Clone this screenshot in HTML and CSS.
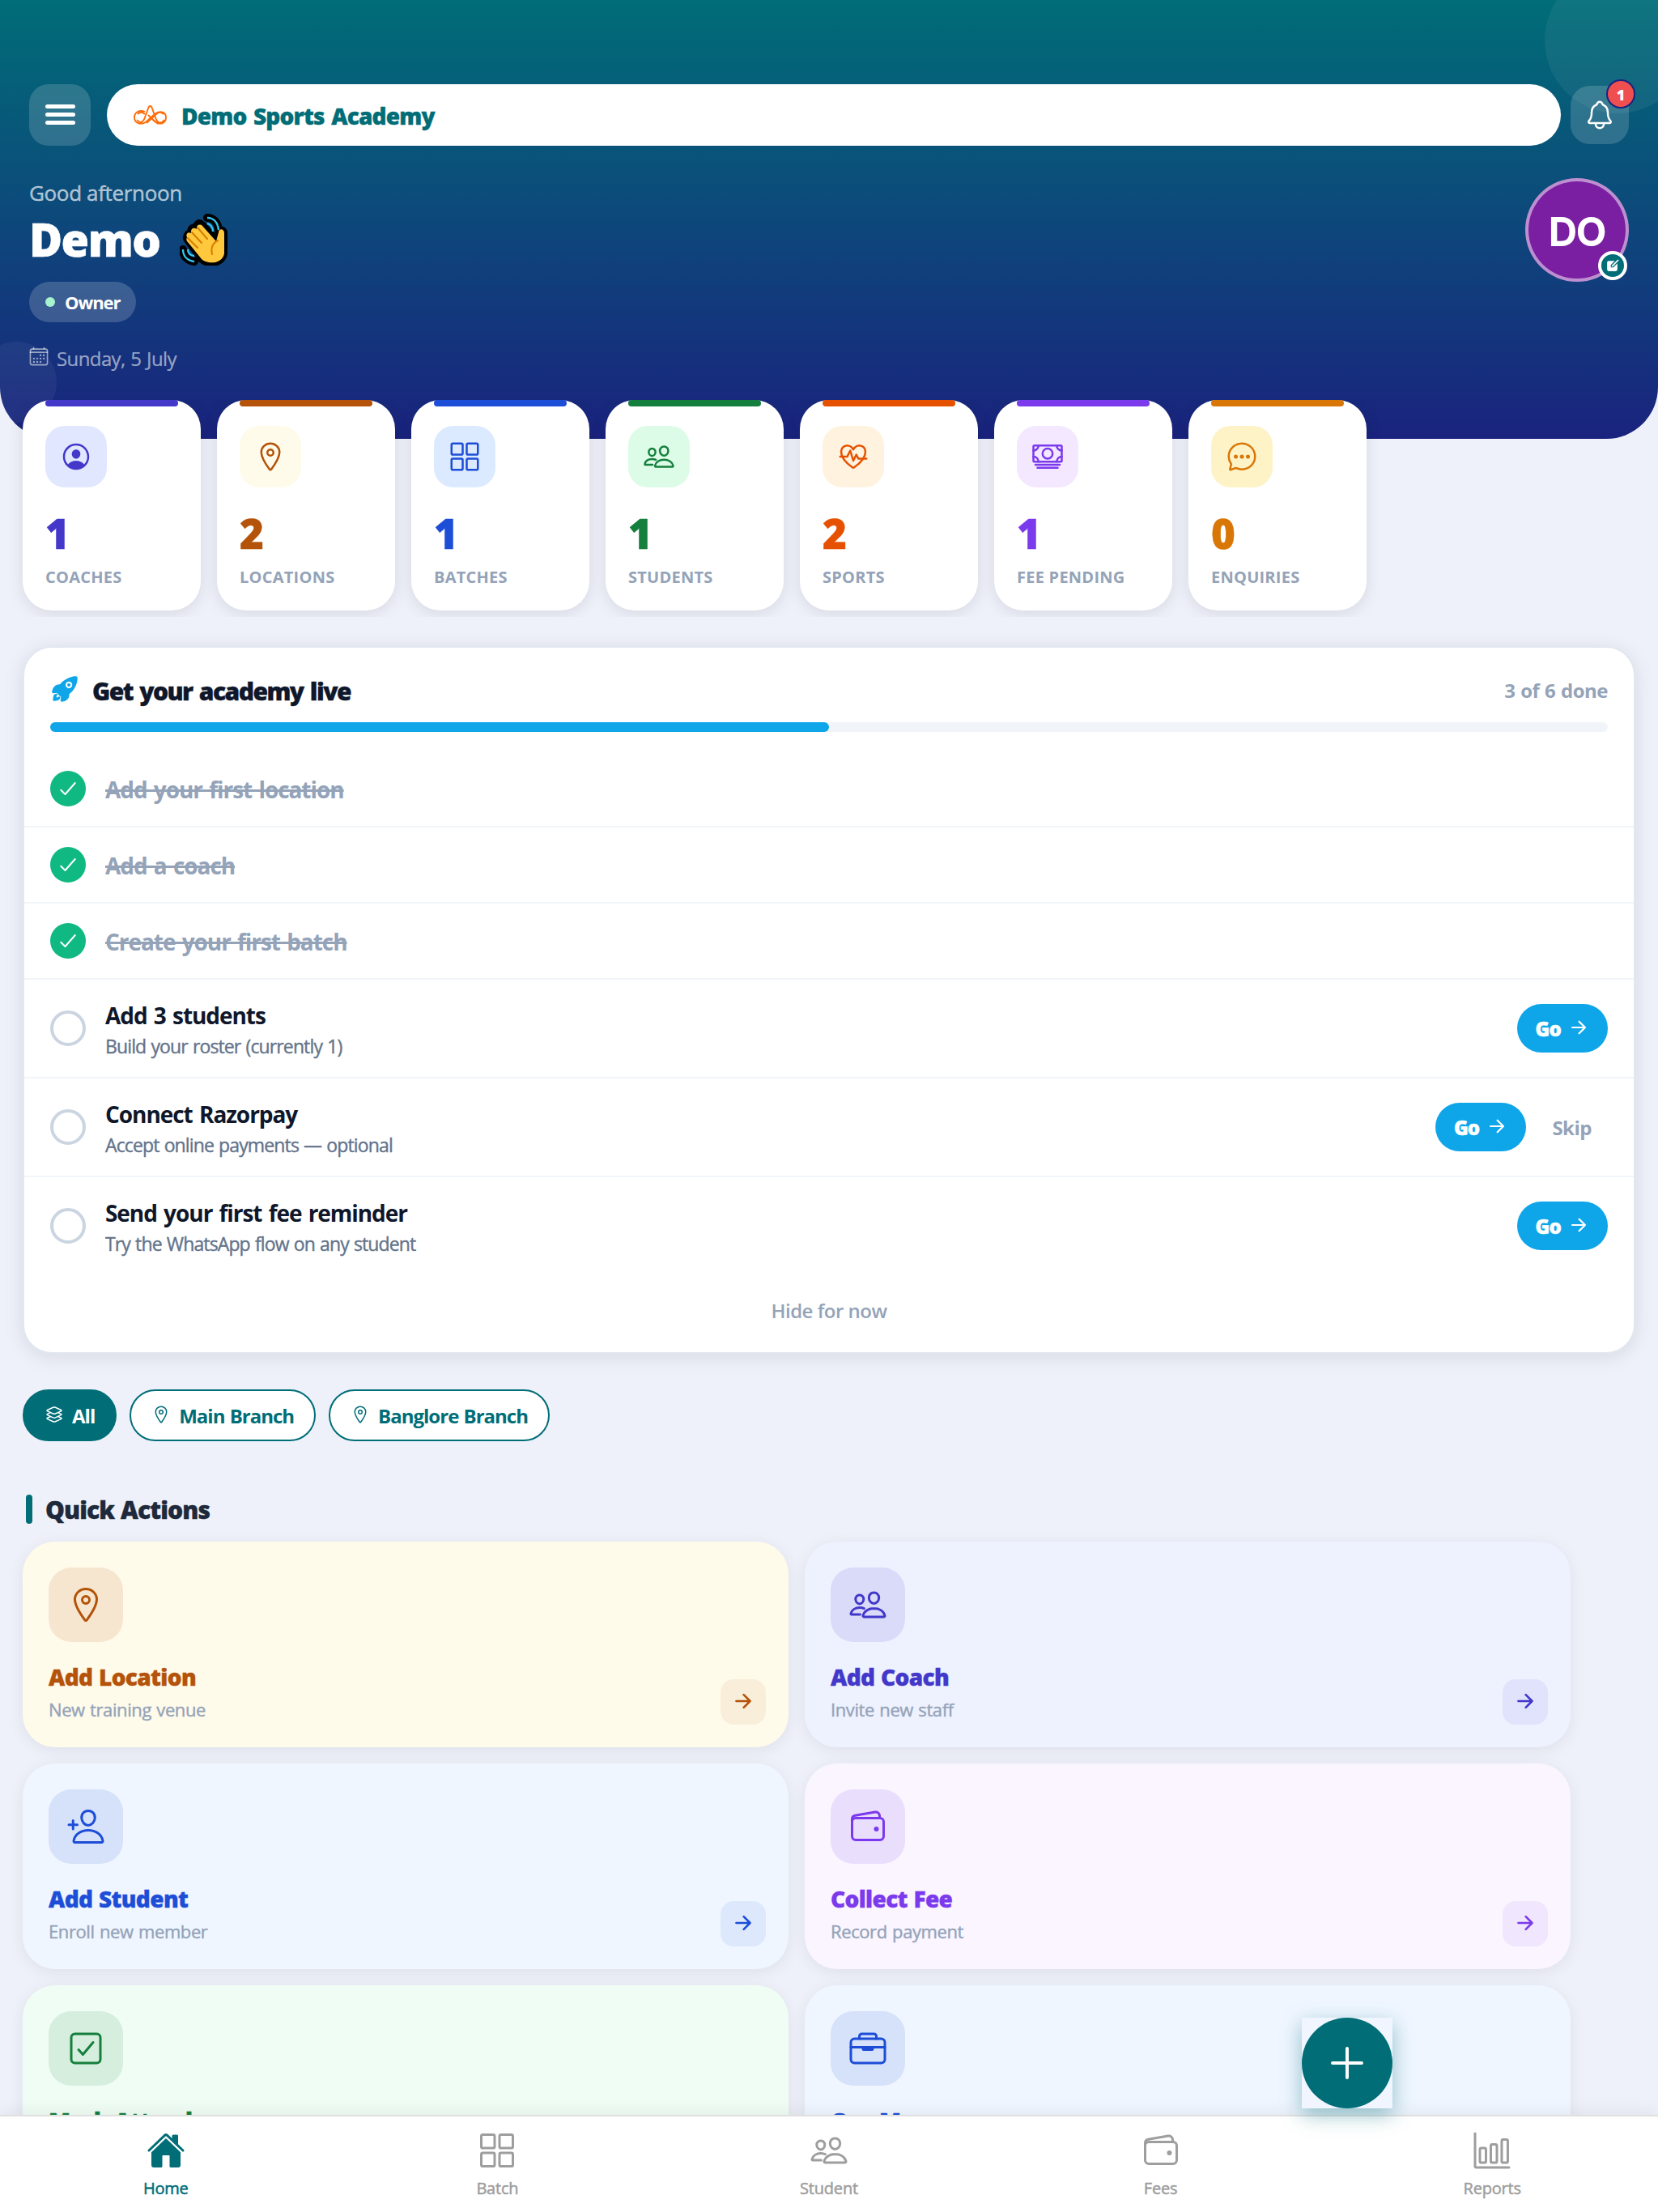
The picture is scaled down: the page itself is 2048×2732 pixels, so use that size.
FILE: index.html
```html
<!DOCTYPE html>
<html lang="en">
<head>
	<meta charset="utf-8">
	<title>Demo Sports Academy</title>
	<link rel="stylesheet" href="styles.css">
</head>
<body>
<!-- icon sprite -->
<svg class="sprite">
	<symbol id="bell" viewBox="0 0 512 512"><path d="M427.68 351.43C402 320 383.87 304 383.87 217.35 383.87 138 343.35 109.73 310 96c-4.43-1.82-8.6-6-9.95-10.55C294.2 65.54 277.8 48 256 48s-38.21 17.55-44 37.47c-1.35 4.6-5.52 8.71-9.95 10.53-33.39 13.75-73.87 41.92-73.87 121.35C128.13 304 110 320 84.32 351.43 73.68 364.45 83 384 101.61 384h308.88c18.51 0 27.77-19.61 17.19-32.57zM320 384v16a64 64 0 01-128 0v-16"/></symbol>
	<symbol id="calendar" viewBox="0 0 512 512"><rect x="48" y="80" width="416" height="384" rx="48"/><path d="M128 48v32M384 48v32M464 160H48"/><g class="solid"><circle cx="296" cy="232" r="24"/><circle cx="376" cy="232" r="24"/><circle cx="296" cy="312" r="24"/><circle cx="376" cy="312" r="24"/><circle cx="136" cy="312" r="24"/><circle cx="216" cy="312" r="24"/><circle cx="136" cy="392" r="24"/><circle cx="216" cy="392" r="24"/><circle cx="296" cy="392" r="24"/></g></symbol>
	<symbol id="coach" viewBox="0 0 512 512"><g class="solid"><path d="M258.9 48C141.92 46.42 46.42 141.92 48 258.9c1.56 112.19 92.91 203.54 205.1 205.1 117 1.6 212.48-93.9 210.88-210.88C462.44 140.91 371.09 49.56 258.9 48zm126.42 327.25a4 4 0 01-6.14-.32 124.27 124.27 0 00-32.35-29.59C321.37 329 289.11 320 256 320s-65.37 9-90.83 25.34a124.24 124.24 0 00-32.35 29.58 4 4 0 01-6.14.32A175.32 175.32 0 0180 259c-1.63-97.31 78.22-178.76 175.57-179S432 158.81 432 256a175.32 175.32 0 01-46.68 119.25z"/><path d="M256 144c-19.72 0-37.55 7.39-50.22 20.82s-19 32-17.57 51.93C191.11 256 221.52 288 256 288s64.83-32 67.79-71.24c1.48-19.74-4.8-38.14-17.68-51.82C293.39 151.44 275.59 144 256 144z"/></g></symbol>
	<symbol id="pin" viewBox="0 0 512 512"><path d="M256 48c-79.5 0-144 61.39-144 137 0 87 96 224.87 131.25 272.49a15.77 15.77 0 0025.5 0C304 409.89 400 272.07 400 185c0-75.61-64.5-137-144-137z"/><circle cx="256" cy="192" r="48"/></symbol>
	<symbol id="grid" viewBox="0 0 512 512"><rect x="48" y="48" width="176" height="176" rx="20"/><rect x="288" y="48" width="176" height="176" rx="20"/><rect x="48" y="288" width="176" height="176" rx="20"/><rect x="288" y="288" width="176" height="176" rx="20"/></symbol>
	<symbol id="people" viewBox="0 0 512 512"><path d="M402 168c-2.93 40.67-33.1 72-66 72s-63.12-31.32-66-72c-3-42.31 26.37-72 66-72s69 30.46 66 72zM336 304c-65.17 0-127.84 32.37-143.54 95.41-2.08 8.34 3.15 16.59 11.72 16.59h263.65c8.57 0 13.77-8.25 11.72-16.59C463.85 335.36 401.18 304 336 304zM200 185.94c-2.34 32.48-26.72 58.06-53 58.06s-50.7-25.57-53-58.06C91.61 152.15 115.34 128 147 128s55.39 24.77 53 57.94zM206 306c-18.05-8.27-37.93-11.45-59-11.45-52 0-102.1 25.85-114.65 76.2-1.65 6.66 2.53 13.25 9.37 13.25H154"/></symbol>
	<symbol id="heart" viewBox="0 0 512 512"><path d="M352.92 80C288 80 256 144 256 144s-32-64-96.92-64c-52.76 0-94.54 44.14-95.08 96.81-1.1 109.33 86.73 187.08 183 252.42a16 16 0 0018 0c96.26-65.34 184.09-143.09 183-252.42-.54-52.67-42.32-96.81-95.08-96.81zM48 256h112l48-96 48 160 48-96 32 64h128"/></symbol>
	<symbol id="cash" viewBox="0 0 512 512"><rect x="32" y="80" width="448" height="256" rx="16"/><path d="M64 384h384M96 432h320M480 160a80 80 0 01-80-80M32 160a80 80 0 0080-80M480 256a80 80 0 00-80 80M32 256a80 80 0 0180 80"/><circle cx="256" cy="208" r="80"/></symbol>
	<symbol id="chat" viewBox="0 0 512 512"><path d="M87.48 380c1.2-4.38-1.43-10.47-3.94-14.86a42.63 42.63 0 00-2.54-3.8 199.81 199.81 0 01-33-110C47.64 139.09 140.72 48 255.82 48 356.2 48 440 117.54 459.57 209.85a199 199 0 014.43 41.64c0 112.41-89.49 204.93-204.59 204.93-18.31 0-43-4.6-56.47-8.37s-26.92-8.77-30.39-10.11a31.14 31.14 0 00-11.13-2.07 30.7 30.7 0 00-12.08 2.43L81.5 462.78a15.92 15.92 0 01-4.66 1.22 9.61 9.61 0 01-9.58-9.74 15.85 15.85 0 01.6-3.29z"/><g class="solid"><circle cx="160" cy="256" r="32"/><circle cx="256" cy="256" r="32"/><circle cx="352" cy="256" r="32"/></g></symbol>
	<symbol id="rocket" viewBox="0 0 512 512"><g class="solid"><path d="M328.85 156.79a26.69 26.69 0 1018.88 7.81 26.6 26.6 0 00-18.88-7.81z"/><path fill-rule="evenodd" d="M477.44 50.06a20.4 20.4 0 00-15.13-15.39c-29.8-7.27-76.68.48-128.63 21.28-52.36 21-101.42 52-134.58 85.22A320.7 320.7 0 00169.55 175c-22.33-1-42 2.18-58.57 9.41-57.74 25.41-74.23 90.44-78.62 117.14a25 25 0 0027.32 29l64.32-7.02.24 2.26a34.36 34.36 0 009.9 20.72l31.39 31.41a34.27 34.27 0 0020.71 9.91l2.15.23-7 64.37A25 25 0 00206 480a25.25 25.25 0 004.15-.34C237 475.34 302 459.05 327.34 401c7.17-16.46 10.34-36.05 9.45-58.34a314.78 314.78 0 0033.95-29.55c33.43-33.26 64.53-81.92 85.31-133.52 20.69-51.36 28.48-98.59 21.39-129.53zM370.38 224.94a58.77 58.77 0 110-83.07 58.3 58.3 0 010 83.07z"/><path d="M161.93 386.44a16 16 0 00-11 2.67c-6.39 4.37-12.81 8.69-19.29 12.9-13.11 8.52-28.79-6.44-21-20l12.15-21a16 16 0 00-15.16-24.91A61.25 61.25 0 0072 353.56c-3.66 3.67-14.79 14.81-20.78 57.26A357.94 357.94 0 0048 447.59 16 16 0 0064 464h.4a359.87 359.87 0 0036.8-3.2c42.47-6 53.61-17.14 57.27-20.8a60.49 60.49 0 0017.39-35.74 16 16 0 00-13.93-17.82z"/></g></symbol>
	<symbol id="check" viewBox="0 0 512 512"><path d="M416 128L192 384l-96-96"/></symbol>
	<symbol id="arrow" viewBox="0 0 512 512"><path d="M268 112l144 144-144 144M392 256H100"/></symbol>
	<symbol id="layers" viewBox="0 0 512 512"><path d="M434.8 137.65l-149.36-68.1c-16.19-7.4-42.69-7.4-58.88 0L77.3 137.65c-17.6 8-17.6 21.09 0 29.09l148 67.5c16.89 7.7 44.69 7.7 61.58 0l148-67.5c17.52-8 17.52-21.1-.08-29.09zM160 308.52l-82.7 37.11c-17.6 8-17.6 21.1 0 29.1l148 67.5c16.89 7.69 44.69 7.69 61.58 0l148-67.5c17.6-8 17.6-21.1 0-29.1l-79.94-38.47M160 204.48l-82.8 37.16c-17.6 8-17.6 21.1 0 29.1l148 67.49c16.89 7.7 44.69 7.7 61.58 0l148-67.49c17.7-8 17.7-21.1.1-29.1L352 204.48"/></symbol>
	<symbol id="add-person" viewBox="0 0 512 512"><path d="M376 144c-3.92 52.87-44 96-88 96s-84.15-43.12-88-96c-4-55 35-96 88-96s92 42 88 96zM288 304c-87 0-175.3 48-191.64 138.6-2 10.92 4.21 21.4 15.65 21.4H464c11.44 0 17.62-10.48 15.65-21.4C463.3 352 375 304 288 304zM88 176v112M144 232H32"/></symbol>
	<symbol id="wallet" viewBox="0 0 512 512"><rect x="48" y="144" width="416" height="288" rx="48"/><path d="M411.36 144v-30A50 50 0 00352 64.9L88.64 109.85A50 50 0 0048 159v49"/><circle class="solid" cx="368" cy="288" r="32"/></symbol>
	<symbol id="checkbox" viewBox="0 0 512 512"><path d="M352 176L217.6 336 160 272"/><rect x="64" y="64" width="384" height="384" rx="48"/></symbol>
	<symbol id="briefcase" viewBox="0 0 512 512"><rect x="32" y="128" width="448" height="320" rx="48"/><path d="M144 128V96a32 32 0 0132-32h160a32 32 0 0132 32v32M480 240H32M320 240v24a8 8 0 01-8 8H200a8 8 0 01-8-8v-24"/></symbol>
	<symbol id="home" viewBox="0 0 512 512"><g class="solid"><path d="M261.56 101.28a8 8 0 00-11.06 0L66.4 277.15a8 8 0 00-2.47 5.79L63.9 448a32 32 0 0032 32H192a16 16 0 0016-16V328a8 8 0 018-8h80a8 8 0 018 8v136a16 16 0 0016 16h96.06a32 32 0 0032-32V282.94a8 8 0 00-2.47-5.79z"/><path d="M490.91 244.15l-74.8-71.56V64a16 16 0 00-16-16h-48a16 16 0 00-16 16v32l-57.92-55.38C272.77 35.14 264.71 32 256 32c-8.68 0-16.72 3.14-22.14 8.63L21.16 244.13c-6.22 6-7 15.87-1.34 22.37A16 16 0 0043 267.56L250.5 69.28a8 8 0 0111.06 0l207.52 198.28a16 16 0 0022.59-.44c6.14-6.36 5.63-16.86-.76-22.97z"/></g></symbol>
	<symbol id="chart" viewBox="0 0 512 512"><path d="M32 32v432a16 16 0 0016 16h432"/><rect x="96" y="224" width="80" height="192" rx="20"/><rect x="240" y="176" width="80" height="240" rx="20"/><rect x="383.64" y="112" width="80" height="304" rx="20"/></symbol>
	<symbol id="plus" viewBox="0 0 512 512"><path d="M256 112v288M400 256H112"/></symbol>
	<symbol id="edit" viewBox="0 0 512 512"><g class="solid"><path d="M120 90h210L190 232v88h88l144-142v214a60 60 0 01-60 60H120a60 60 0 01-60-60V150a60 60 0 0160-60z"/><path d="M440 40l34 34-208 212-46 10 10-46z"/></g></symbol>
	<symbol id="wave" viewBox="0 0 60 64">
		<path class="wave-line" d="M34 5c8 0 13 6 14 15M4 44c0 9 6 14 14 15"/>
		<path class="wave-outline" d="M22 26l-9-1c-5 0-7 5-3 9l17 23c7 7 26 6 28-8V24c0-6-7-6-8-1l-1 10L28 13c-4-4-9-1-7 4-5-2-9 1-7 6-4 0-6 3-5 6"/>
		<path class="wave-mark" d="M34 5c8 0 13 6 14 15M34 12c4 1 7 5 7 10M4 44c0 9 6 14 14 15M10 44c0 4 3 8 8 8"/>
		<path class="wave-hand" d="M9 29c-2-4 1-7 5-5-1-5 3-8 7-5-1-5 4-7 7-4l17 19 3-11c0-5 7-5 7 1v25c-2 13-20 14-28 7L10 35c-2-2-2-4-1-6z"/>
		<path class="wave-crease" d="M22 17l12 14M15 23l12 13M10 30l12 12M47 33c-6 3-9 8-7 17"/>
	</symbol>
</svg>

<div class="header">
	<span class="blob blob-top"></span>
	<span class="blob blob-bottom"></span>
	<div class="topbar">
		<div class="menu"><i></i><i></i><i></i></div>
		<div class="academy">
			<svg class="logo" viewBox="0 0 42 26"><path d="M14 9C7 6 1 10 1 16c0 8 9 10 15 5l10-9c6-5 14-3 14 4 0 8-8 10-14 5L18 13M4 19c4 5 8 3 10-3l4-11c1-4 4-4 5 0l4 11c2 7 7 9 11 3M5 12c3-3 6-3 9 0M37 12c-3-3-6-3-9 0l-12 11M22 17l8 7"/></svg>
			<span>Demo Sports Academy</span>
		</div>
		<div class="bell"><svg class="icon"><use href="#bell"/></svg><span class="count">1</span></div>
	</div>
	<div class="welcome">
		<div>
			<div class="greeting">Good afternoon</div>
			<h1><span>Demo</span><svg class="hand"><use href="#wave"/></svg></h1>
			<div class="role"><i></i><span>Owner</span></div>
			<div class="date"><svg class="icon"><use href="#calendar"/></svg><span>Sunday, 5 July</span></div>
		</div>
		<div class="avatar">DO<span class="edit"><svg class="icon"><use href="#edit"/></svg></span></div>
	</div>
</div>

<div class="stats">
	<div class="stat indigo"><div class="stat-icon"><svg class="icon"><use href="#coach"/></svg></div><b>1</b><span>COACHES</span></div>
	<div class="stat amber"><div class="stat-icon"><svg class="icon"><use href="#pin"/></svg></div><b>2</b><span>LOCATIONS</span></div>
	<div class="stat blue"><div class="stat-icon"><svg class="icon"><use href="#grid"/></svg></div><b>1</b><span>BATCHES</span></div>
	<div class="stat green"><div class="stat-icon"><svg class="icon"><use href="#people"/></svg></div><b>1</b><span>STUDENTS</span></div>
	<div class="stat orange"><div class="stat-icon"><svg class="icon"><use href="#heart"/></svg></div><b>2</b><span>SPORTS</span></div>
	<div class="stat violet"><div class="stat-icon"><svg class="icon"><use href="#cash"/></svg></div><b>1</b><span>FEE PENDING</span></div>
	<div class="stat gold"><div class="stat-icon"><svg class="icon"><use href="#chat"/></svg></div><b>0</b><span>ENQUIRIES</span></div>
</div>

<!-- onboarding checklist -->
<div class="setup">
	<div class="setup-head">
		<svg class="icon"><use href="#rocket"/></svg>
		<h2>Get your academy live</h2>
		<span class="done-count">3 of 6 done</span>
	</div>
	<div class="progress"><div style="width: 50%"></div></div>
	<div class="steps">
		<div class="step done"><i class="tick"><svg class="icon"><use href="#check"/></svg></i><div class="step-text"><b>Add your first location</b></div></div>
		<div class="step done"><i class="tick"><svg class="icon"><use href="#check"/></svg></i><div class="step-text"><b>Add a coach</b></div></div>
		<div class="step done"><i class="tick"><svg class="icon"><use href="#check"/></svg></i><div class="step-text"><b>Create your first batch</b></div></div>
		<div class="step"><i class="tick"></i><div class="step-text"><b>Add 3 students</b><span>Build your roster (currently 1)</span></div><a class="go">Go<svg class="icon"><use href="#arrow"/></svg></a></div>
		<div class="step"><i class="tick"></i><div class="step-text"><b>Connect Razorpay</b><span>Accept online payments — optional</span></div><a class="go">Go<svg class="icon"><use href="#arrow"/></svg></a><a class="skip">Skip</a></div>
		<div class="step"><i class="tick"></i><div class="step-text"><b>Send your first fee reminder</b><span>Try the WhatsApp flow on any student</span></div><a class="go">Go<svg class="icon"><use href="#arrow"/></svg></a></div>
	</div>
	<div class="hide"><span>Hide for now</span></div>
</div>

<div class="branches">
	<a class="branch active"><svg class="icon"><use href="#layers"/></svg><span>All</span></a>
	<a class="branch"><svg class="icon"><use href="#pin"/></svg><span>Main Branch</span></a>
	<a class="branch"><svg class="icon"><use href="#pin"/></svg><span>Banglore Branch</span></a>
</div>

<div class="section-title"><i></i><h2>Quick Actions</h2></div>
<div class="actions">
	<div class="action amber"><div class="action-icon"><svg class="icon"><use href="#pin"/></svg></div><b>Add Location</b><span>New training venue</span><i class="next"><svg class="icon"><use href="#arrow"/></svg></i></div>
	<div class="action indigo"><div class="action-icon"><svg class="icon"><use href="#people"/></svg></div><b>Add Coach</b><span>Invite new staff</span><i class="next"><svg class="icon"><use href="#arrow"/></svg></i></div>
	<div class="action blue"><div class="action-icon"><svg class="icon"><use href="#add-person"/></svg></div><b>Add Student</b><span>Enroll new member</span><i class="next"><svg class="icon"><use href="#arrow"/></svg></i></div>
	<div class="action violet"><div class="action-icon"><svg class="icon"><use href="#wallet"/></svg></div><b>Collect Fee</b><span>Record payment</span><i class="next"><svg class="icon"><use href="#arrow"/></svg></i></div>
	<div class="action green"><div class="action-icon"><svg class="icon"><use href="#checkbox"/></svg></div><b>Mark Attendance</b></div>
	<div class="action blue"><div class="action-icon"><svg class="icon"><use href="#briefcase"/></svg></div><b>Our Menu</b></div>
</div>

<div class="tabs">
	<a class="tab active"><svg class="icon"><use href="#home"/></svg><span>Home</span></a>
	<a class="tab"><svg class="icon"><use href="#grid"/></svg><span>Batch</span></a>
	<a class="tab"><svg class="icon"><use href="#people"/></svg><span>Student</span></a>
	<a class="tab"><svg class="icon"><use href="#wallet"/></svg><span>Fees</span></a>
	<a class="tab"><svg class="icon"><use href="#chart"/></svg><span>Reports</span></a>
</div>
<div class="fab"><div><svg class="icon"><use href="#plus"/></svg></div></div>
</body>
</html>
```

FILE: styles.css
```css
* { box-sizing: border-box; }
body, h1, h2 { margin: 0; padding: 0; }
i { font-style: normal; }
html, body { height: 2732px; overflow: hidden; }
body { position: relative; background: #eef1f9; font-family: "Open Sans", "Noto Sans", sans-serif; color: #0f172a; }

.sprite { position: absolute; width: 0; height: 0; }
.icon { display: block; flex: none; fill: none; stroke: currentColor; stroke-width: 32; stroke-linecap: round; stroke-linejoin: round; }
.solid { fill: currentColor; stroke: none; }

/* header */
.header { position: relative; height: 542px; padding: 104px 36px 0; border-radius: 0 0 64px 64px; overflow: hidden; background: linear-gradient(180deg, #006d77, #1a237e); color: #fff; }
.blob { position: absolute; border-radius: 50%; background: rgba(255,255,255,.06); }
.blob-top { top: -40px; right: -40px; width: 180px; height: 180px; }
.blob-bottom { bottom: 20px; left: -30px; width: 100px; height: 100px; background: rgba(255,255,255,.05); }
.topbar { position: relative; display: flex; align-items: center; }
.menu { display: flex; flex-direction: column; align-items: center; justify-content: center; gap: 5px; width: 76px; height: 76px; padding-bottom: 1px; border-radius: 24px; background: rgba(255,255,255,.16); }
.menu i { width: 37px; height: 5px; border-radius: 3px; background: #fff; }
.academy { display: flex; align-items: center; flex: 1; height: 76px; margin: 0 12px 0 20px; padding: 0 33px; border-radius: 38px; background: #fff; color: #006d77; font-size: 28px; font-weight: 800; letter-spacing: -.8px; word-spacing: 2px; -webkit-text-stroke: .4px; }
.academy span { padding-top: 2px; }
.logo { width: 42px; height: 26px; margin-right: 17px; fill: none; stroke: #ff6d0a; stroke-width: 1.9; }
.bell { position: relative; width: 72px; height: 72px; padding: 16px; border-radius: 24px; background: rgba(255,255,255,.16); }
.bell .icon { width: 40px; height: 40px; }
.count { position: absolute; top: -8px; right: -8px; width: 36px; height: 36px; border: 2px solid #1a237e; border-radius: 50%; background: #f04f50; font-size: 18px; font-weight: 800; line-height: 34px; text-align: center; }
.welcome { position: relative; display: flex; justify-content: space-between; margin-top: 40px; }
.greeting { font-size: 26px; line-height: 37px; height: 36px; letter-spacing: -.35px; color: rgba(255,255,255,.65); -webkit-text-stroke: .4px; }
h1 { display: flex; font-size: 56px; font-weight: 800; line-height: 78px; height: 76px; letter-spacing: -1.5px; -webkit-text-stroke: .6px; }
.hand { width: 60px; height: 64px; margin: 8px 0 0 25px; }
.wave-line, .wave-outline { fill: #000; stroke: #000; stroke-width: 8; stroke-linecap: round; stroke-linejoin: round; }
.wave-line { fill: none; stroke-width: 10; }
.wave-mark { fill: none; stroke: #30c8f4; stroke-width: 2.4; }
.wave-hand { fill: #ffc83d; }
.wave-crease { fill: none; stroke: #d67d00; stroke-width: 2; stroke-linecap: round; }
.role { display: inline-flex; align-items: center; gap: 12px; height: 50px; margin-top: 16px; padding: 0 20px; border-radius: 25px; background: rgba(255,255,255,.18); font-size: 22px; font-weight: 700; letter-spacing: -1.1px; }
.role i { width: 12px; height: 12px; border-radius: 50%; background: #a7f3d0; }
.date { display: flex; align-items: center; gap: 9px; height: 34px; margin: 27px 0 0 -1px; color: rgba(255,255,255,.55); font-size: 24px; letter-spacing: -.6px; word-spacing: 1px; -webkit-text-stroke: .2px; }
.date .icon { width: 26px; height: 26px; margin-top: -4px; }
.avatar { position: relative; width: 128px; height: 128px; border: 4px solid rgba(255,255,255,.5); border-radius: 50%; background: #7b1fa2; font-family: "Inter", sans-serif; font-size: 49px; font-weight: 700; line-height: 125px; letter-spacing: -1.2px; text-align: center; }
.edit { position: absolute; right: -2px; bottom: -2px; display: flex; align-items: center; justify-content: center; width: 36px; height: 36px; border: 4px solid #fff; border-radius: 50%; background: #006d77; }
.edit .icon { width: 18px; height: 18px; }

/* palette */
.indigo { --c: #4338ca; --tile: #e0e7ff; --bg: #eef2ff; }
.amber { --c: #b45309; --tile: #fffbeb; --bg: #fffbeb; }
.blue { --c: #1d4ed8; --tile: #dbeafe; --bg: #eff6ff; }
.green { --c: #15803d; --tile: #dcfce7; --bg: #f0fdf4; }
.orange { --c: #e65100; --tile: #fff3e0; }
.violet { --c: #7c3aed; --tile: #f3e8ff; --bg: #faf5ff; }
.gold { --c: #d97706; --tile: #fef3c7; }

/* counters */
.stats { position: relative; display: flex; gap: 20px; height: 268px; margin-top: -48px; padding: 0 28px; overflow: hidden; }
.stat { position: relative; display: flex; flex-direction: column; flex: none; width: 220px; height: 260px; padding: 32px 28px 0; border-radius: 36px; background: #fff; box-shadow: 0 4px 20px rgba(0,0,0,.1); }
.stat::before { content: ''; position: absolute; top: 0; left: 28px; right: 28px; height: 8px; border-radius: 4px; background: var(--c); }
.stat-icon { display: flex; align-items: center; justify-content: center; flex: none; width: 76px; height: 76px; border-radius: 24px; background: var(--tile); color: var(--c); }
.stat-icon .icon { width: 40px; height: 40px; }
.stat b { margin-top: 24px; color: var(--c); font-size: 51px; font-weight: 800; line-height: 64px; letter-spacing: -2px; -webkit-text-stroke: .5px; }
.stat span { margin-top: 9px; color: #94a3b8; font-size: 20px; font-weight: 700; line-height: 28px; letter-spacing: .25px; white-space: nowrap; }

.setup { height: 874px; margin: 36px 28px 0; padding: 30px 0 0; border: 2px solid #e2e8f0; border-radius: 36px; background: #fff; box-shadow: 0 4px 24px rgba(15,23,42,.1); }
.setup-head { display: flex; align-items: center; height: 42px; padding: 0 32px; }
.setup-head .icon { width: 36px; height: 36px; margin: 0 16px 0 0; color: #0ea5e9; }
.setup-head h2 { flex: 1; padding-top: 4px; font-size: 30px; font-weight: 800; letter-spacing: -1.55px; word-spacing: 2px; -webkit-text-stroke: .4px; }
.done-count { padding-top: 3px; color: #94a3b8; font-size: 24px; font-weight: 700; letter-spacing: -.5px; word-spacing: 1px; }
.progress { height: 12px; margin: 20px 32px 24px; border-radius: 6px; background: #f1f5f9; }
.progress div { height: 12px; border-radius: 6px; background: #0ea5e9; }
.step { display: flex; align-items: center; height: 122px; padding: 0 32px; border-bottom: 2px solid #f1f5f9; }
.step.done { height: 94px; }
.step:last-child { height: 120px; border: 0; }
.tick { flex: none; width: 44px; height: 44px; margin-right: 24px; border: 4px solid #cbd5e1; border-radius: 50%; }
.done .tick { padding: 8px; border: 0; background: #10b981; color: #fff; }
.tick .icon { width: 28px; height: 28px; stroke-width: 36; }
.step-text { flex: 1; display: flex; flex-direction: column; padding-top: 2px; }
.step b { font-size: 28px; font-weight: 700; line-height: 38px; letter-spacing: -1.05px; word-spacing: 2px; }
.step-text span { margin-top: 3px; color: #64748b; font-size: 23px; line-height: 32px; letter-spacing: -.87px; word-spacing: 1px; -webkit-text-stroke: .4px; }
.done b { align-self: flex-start; color: #94a3b8; text-decoration: line-through; text-decoration-thickness: 3px; }
.go { display: flex; align-items: center; gap: 9px; height: 60px; padding: 0 23px; border-radius: 30px; background: #0ea5e9; color: #fff; font-size: 24px; font-weight: 800; letter-spacing: -.8px; -webkit-text-stroke: .5px; }
.go .icon { width: 26px; height: 26px; margin-top: -3px; stroke-width: 44; }
.skip { padding: 1px 20px 0 32px; color: #94a3b8; font-size: 24px; font-weight: 700; letter-spacing: -.5px; }
.hide { display: flex; align-items: center; justify-content: center; height: 89px; color: #94a3b8; font-size: 24px; font-weight: 600; letter-spacing: -.5px; }

/* branch filter */
.branches { display: flex; gap: 16px; margin: 44px 28px 0; }
.branch { display: flex; align-items: center; gap: 10px; height: 64px; padding: 0 25px; border: 2px solid #006d77; border-radius: 32px; background: #fff; color: #006d77; font-size: 24px; font-weight: 700; letter-spacing: -1px; word-spacing: 1px; }
.branch .icon { width: 24px; height: 24px; margin-top: -3px; }
.branch.active { background: #006d77; color: #fff; }

.section-title { display: flex; align-items: center; gap: 16px; height: 48px; margin: 60px 32px 16px; }
.section-title i { width: 8px; height: 36px; border-radius: 4px; background: #006d77; }
.section-title h2 { padding-top: 1px; color: #1e293b; font-size: 30px; font-weight: 800; letter-spacing: -.9px; word-spacing: 1px; -webkit-text-stroke: .4px; }
.actions { display: grid; grid-template-columns: 946px 946px; gap: 20px; padding-left: 28px; }
.action { position: relative; display: flex; flex-direction: column; height: 254px; padding: 32px; border-radius: 40px; background: var(--bg); box-shadow: 0 4px 20px rgba(0,0,0,.07); }
.action-icon { position: relative; display: flex; align-items: center; justify-content: center; width: 92px; height: 92px; color: var(--c); }
.action-icon::before, .next::before { content: ''; position: absolute; inset: 0; border-radius: 28px; background: var(--c); opacity: .12; }
.action-icon .icon { width: 48px; height: 48px; }
.action b { margin-top: 24px; color: var(--c); font-size: 28px; font-weight: 800; line-height: 38px; letter-spacing: -.65px; word-spacing: 1px; -webkit-text-stroke: .4px; }
.action > span { margin-top: 6px; color: #94a3b8; font-size: 22px; line-height: 30px; letter-spacing: -.4px; word-spacing: 1px; -webkit-text-stroke: .4px; }
.next { position: absolute; right: 28px; bottom: 28px; width: 56px; height: 56px; padding: 13px 14px; color: var(--c); }
.next::before { border-radius: 16px; opacity: .08; }
.next .icon { width: 28px; height: 28px; stroke-width: 48; }

/* bottom tabs */
.tabs { position: absolute; left: 0; right: 0; bottom: 0; display: flex; height: 120px; border-top: 2px solid #e0e0e0; background: #fff; box-shadow: 0 -4px 20px rgba(0,0,0,.06); }
.tab { flex: 1; display: flex; flex-direction: column; align-items: center; padding-top: 18px; color: #9e9e9e; }
.tab .icon { width: 48px; height: 48px; }
.tab span { margin-top: 9px; font-size: 20px; line-height: 28px; letter-spacing: -.2px; -webkit-text-stroke: .5px; }
.tab.active { color: #006d77; }
.fab { position: absolute; right: 328px; bottom: 128px; width: 112px; height: 112px; background: #f0f5ff; box-shadow: 0 8px 24px rgba(0,109,119,.4); }
.fab div { padding: 24px; border-radius: 50%; background: #006d77; color: #fff; }
.fab .icon { width: 64px; height: 64px; }
```
